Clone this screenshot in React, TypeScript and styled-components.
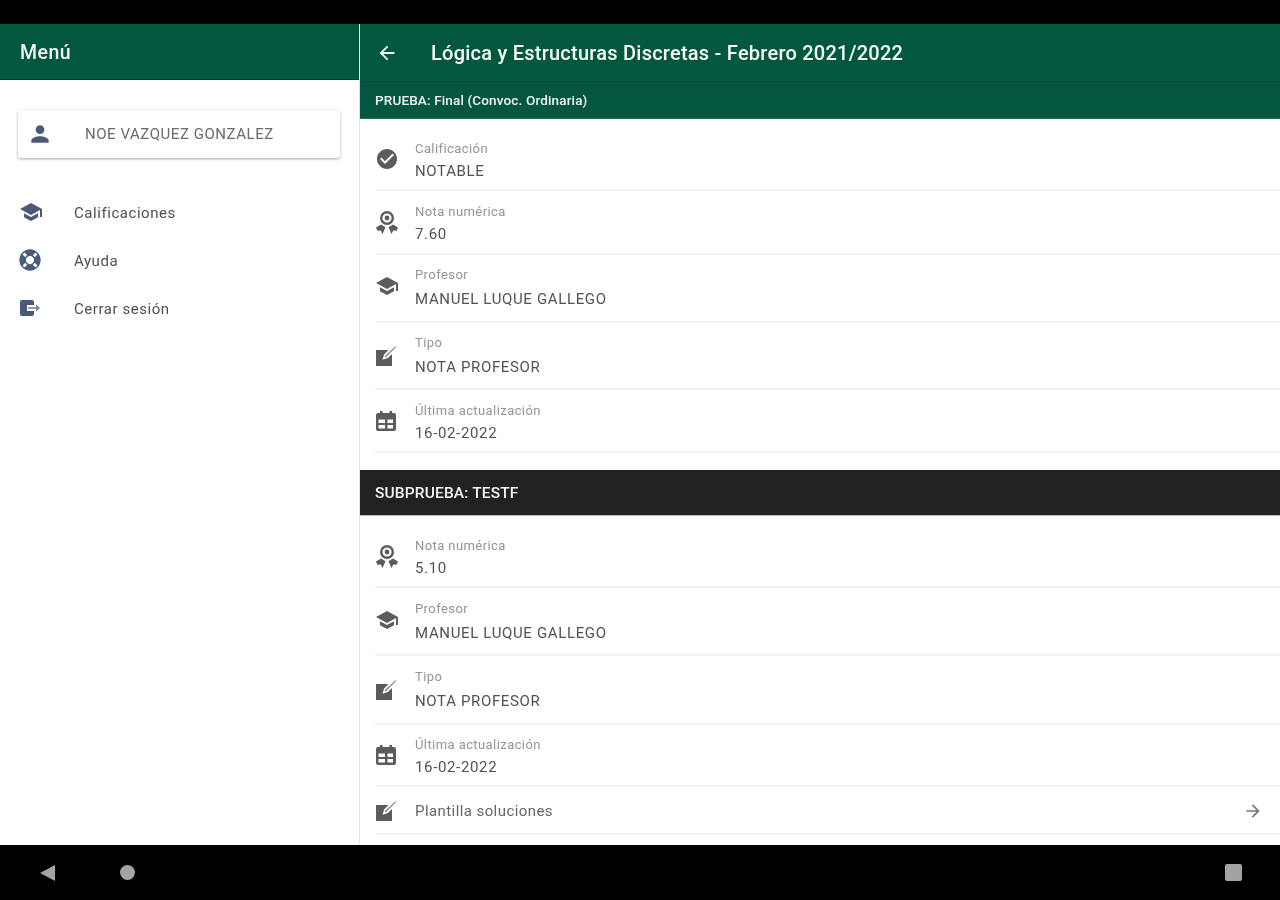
import React from 'react';
import styled, { createGlobalStyle } from 'styled-components';
import { MdArrowBack, MdCheckCircle, MdPerson, MdSchool } from 'react-icons/md';
import { FaLifeRing } from 'react-icons/fa';

const GlobalStyle = createGlobalStyle`
  html, body {
    margin: 0;
    padding: 0;
    background: #000000;
  }
  * {
    box-sizing: border-box;
  }
`;

const Screen = styled.div`
  width: 1280px;
  height: 900px;
  display: flex;
  flex-direction: column;
  background: #000000;
  font-family: Roboto, "Liberation Sans", sans-serif;
  overflow: hidden;
  filter: blur(0.6px);
`;

const StatusBar = styled.div`
  flex: 0 0 24px;
`;

const Body = styled.div`
  flex: 0 0 821px;
  display: flex;
  background: #ffffff;
  overflow: hidden;
`;

const Sidebar = styled.aside`
  flex: 0 0 360px;
  border-right: 1px solid #e2e2e2;
`;

const SideHeader = styled.div`
  height: 56px;
  display: flex;
  align-items: center;
  padding: 2px 0 0 20px;
  background: #03573f;
  border-bottom: 1px solid #0a3a2c;
  color: #f2f5f3;
  font-size: 19.5px;
  font-weight: 500;
  letter-spacing: 0.45px;
`;

const UserCard = styled.div`
  height: 48px;
  margin: 30px 19px 30px 18px;
  display: flex;
  align-items: center;
  padding-left: 9px;
  border-radius: 3px;
  background: #ffffff;
  box-shadow: 0 1px 3px rgba(0, 0, 0, 0.35);
  color: #6a6a6a;
  font-size: 15px;
  letter-spacing: 0.55px;
  svg {
    flex: 0 0 26px;
    margin-right: 32px;
    color: #4a5a78;
  }
`;

const MenuItem = styled.div`
  height: 48px;
  padding-top: 2px;
  display: flex;
  align-items: center;
  padding-left: 19px;
  color: #4f4f4f;
  font-size: 15px;
  letter-spacing: 0.55px;
`;

const MenuIcon = styled.span`
  flex: 0 0 55px;
  display: flex;
  align-items: center;
  margin-bottom: 2px;
  color: #4a5a78;
`;

const Main = styled.main`
  flex: 1;
  min-width: 0;
`;

const TitleBar = styled.div`
  height: 58px;
  display: flex;
  align-items: center;
  padding-left: 16px;
  background: #03573f;
  border-bottom: 1px solid #0a4a36;
  color: #f8faf9;
  font-size: 20px;
  font-weight: 500;
  letter-spacing: 0.24px;
  svg {
    flex: 0 0 22px;
    margin-right: 33px;
  }
`;

const SectionBar = styled.div<{ $dark?: boolean }>`
  height: ${(p) => (p.$dark ? '46px' : '37px')};
  margin-top: ${(p) => (p.$dark ? '17px' : '0')};
  display: flex;
  align-items: center;
  padding-left: 15px;
  background: ${(p) => (p.$dark ? '#212121' : '#03573f')};
  border-bottom: 1px solid ${(p) => (p.$dark ? '#bdbdbd' : '#2a6f5b')};
  color: #f4f4f4;
  font-size: ${(p) => (p.$dark ? '15.5px' : '13.5px')};
  font-weight: 500;
  letter-spacing: 0.15px;
`;

const List = styled.div`
  padding-left: 15px;
`;

const Row = styled.div<{ $top: number; $bottom: number }>`
  padding: ${(p) => p.$top}px 0 ${(p) => p.$bottom}px;
  display: flex;
  align-items: center;
  border-bottom: 2px solid #f2f2f2;
`;

const RowIcon = styled.span`
  flex: 0 0 40px;
  display: flex;
  align-items: center;
  margin-bottom: 3px;
  color: #5c5c5c;
`;

const RowText = styled.div`
  flex: 1;
  min-width: 0;
`;

const Label = styled.div`
  color: #949494;
  font-size: 13px;
  line-height: 16px;
  letter-spacing: 0.42px;
`;

const Value = styled.div<{ $tall?: boolean }>`
  margin-top: ${(p) => (p.$tall ? '7px' : '5px')};
  color: #525252;
  font-size: 15px;
  line-height: 18px;
  letter-spacing: 0.65px;
`;

const LinkText = styled.div`
  color: #666666;
  font-size: 15px;
  line-height: 22px;
  letter-spacing: 0.42px;
`;

const LinkArrow = styled.span`
  display: flex;
  margin-right: 17px;
  color: #777777;
  svg {
    transform: scaleX(-1);
  }
`;

const NavBar = styled.div`
  flex: 0 0 55px;
  display: flex;
  align-items: center;
  padding: 0 39px;
  svg {
    display: block;
  }
`;

const NavHome = styled.span`
  width: 15px;
  height: 15px;
  margin-left: 64px;
  border-radius: 50%;
  background: #a3a3a3;
`;

const NavRecent = styled.span`
  width: 17px;
  height: 17px;
  margin-left: auto;
  margin-right: -1px;
  border-radius: 2px;
  background: #a3a3a3;
`;

const AwardIcon = () => (
  <svg width="24" height="25" viewBox="0 0 24 25" fill="currentColor">
    <path fillRule="evenodd" d="M12 1a7 7 0 1 1 0 14 7 7 0 0 1 0-14Zm0 2.400a4.600 4.600 0 1 0 0 9.200 4.600 4.600 0 0 0 0-9.200Zm0 2.200a2.400 2.400 0 1 1 0 4.800 2.400 2.400 0 0 1 0-4.800Z" />
    <path d="M1 17.500 6 14.500l4.500 2.800L7.500 24l-1.800-3.600-3.400.4ZM23 17.500l-5-3-4.500 2.800 3 6.700 1.800-3.600 3.400.4Z" />
  </svg>
);

const EditIcon = () => (
  <svg width="22" height="26" viewBox="0 -4 22 26" fill="currentColor">
    <path d="M1 5h12.500l-4.400 4.400-1.600 5.300 5.300-1.600 4.200-4.200V21H1Z" />
    <path d="M9.600 11.200 20.400 1.200l.8.800-10.400 10.600Z" opacity="0.7" />
  </svg>
);

const CalendarIcon = () => (
  <svg width="22" height="22" viewBox="0 0 22 22" fill="currentColor">
    <path fillRule="evenodd" d="M3 3h16a2 2 0 0 1 2 2v14a2 2 0 0 1-2 2H3a2 2 0 0 1-2-2V5a2 2 0 0 1 2-2Zm.5 6.500V13H10V9.500Zm9 0V13H18V9.500Zm-9 5.500V18.500H10V15Zm9 0V18.500H18V15Z" />
    <path d="M5 1h2.500v3H5ZM14.500 1H17v3h-2.500Z" />
  </svg>
);

const LogoutIcon = () => (
  <svg width="22" height="18" viewBox="0 0 22 18" fill="currentColor">
    <path d="M1 3a2 2 0 0 1 2-2h10a2 2 0 0 1 2 2v3H8v6h7v3a2 2 0 0 1-2 2H3a2 2 0 0 1-2-2Z" />
    <path d="M17 5.500 21 9l-4 3.500Z" opacity="0.75" />
    <path d="M9 8h8v2H9Z" opacity="0.6" />
  </svg>
);

type Item = { icon: React.ReactNode; label: string; value: string; top: number; bottom: number; tall?: boolean };

const check = <MdCheckCircle size={24} />;
const award = <AwardIcon />;
const school = <MdSchool size={24} />;
const edit = <EditIcon />;
const calendar = <CalendarIcon />;

const prueba: Item[] = [
  { icon: check, label: 'Calificación', value: 'NOTABLE', top: 22, bottom: 9 },
  { icon: award, label: 'Nota numérica', value: '7.60', top: 13, bottom: 10 },
  { icon: school, label: 'Profesor', value: 'MANUEL LUQUE GALLEGO', top: 12, bottom: 13, tall: true },
  { icon: edit, label: 'Tipo', value: 'NOTA PROFESOR', top: 12, bottom: 12, tall: true },
  { icon: calendar, label: 'Última actualización', value: '16-02-2022', top: 13, bottom: 9 },
];

const subprueba: Item[] = [
  { icon: award, label: 'Nota numérica', value: '5.10', top: 22, bottom: 9 },
  { icon: school, label: 'Profesor', value: 'MANUEL LUQUE GALLEGO', top: 13, bottom: 12, tall: true },
  { icon: edit, label: 'Tipo', value: 'NOTA PROFESOR', top: 13, bottom: 13, tall: true },
  { icon: calendar, label: 'Última actualización', value: '16-02-2022', top: 12, bottom: 9 },
];

const Rows: React.FC<{ items: Item[] }> = ({ items }) => (
  <>
    {items.map((item, i) => (
      <Row $top={item.top} $bottom={item.bottom} key={i}>
        <RowIcon>{item.icon}</RowIcon>
        <RowText>
          <Label>{item.label}</Label>
          <Value $tall={item.tall}>{item.value}</Value>
        </RowText>
      </Row>
    ))}
  </>
);

const App: React.FC = () => {
  return (
    <Screen>
      <GlobalStyle />
      <StatusBar />
      <Body>
        <Sidebar>
          <SideHeader>Menú</SideHeader>
          <UserCard>
            <MdPerson size={26} />
            NOE VAZQUEZ GONZALEZ
          </UserCard>
          <MenuItem>
            <MenuIcon>
              <MdSchool size={24} />
            </MenuIcon>
            Calificaciones
          </MenuItem>
          <MenuItem>
            <MenuIcon>
              <FaLifeRing size={22} />
            </MenuIcon>
            Ayuda
          </MenuItem>
          <MenuItem>
            <MenuIcon>
              <LogoutIcon />
            </MenuIcon>
            Cerrar sesión
          </MenuItem>
        </Sidebar>
        <Main>
          <TitleBar>
            <MdArrowBack size={22} />
            Lógica y Estructuras Discretas - Febrero 2021/2022
          </TitleBar>
          <SectionBar>PRUEBA: Final (Convoc. Ordinaria)</SectionBar>
          <List>
            <Rows items={prueba} />
          </List>
          <SectionBar $dark>SUBPRUEBA: TESTF</SectionBar>
          <List>
            <Rows items={subprueba} />
            <Row $top={9} $bottom={8}>
              <RowIcon>{edit}</RowIcon>
              <RowText>
                <LinkText>Plantilla soluciones</LinkText>
              </RowText>
              <LinkArrow>
                <MdArrowBack size={20} />
              </LinkArrow>
            </Row>
          </List>
        </Main>
      </Body>
      <NavBar>
        <svg width="17" height="18" viewBox="0 0 17 18" fill="#a3a3a3">
          <path d="M16 1v16L1 9Z" />
        </svg>
        <NavHome />
        <NavRecent />
      </NavBar>
    </Screen>
  );
};

export default App;
